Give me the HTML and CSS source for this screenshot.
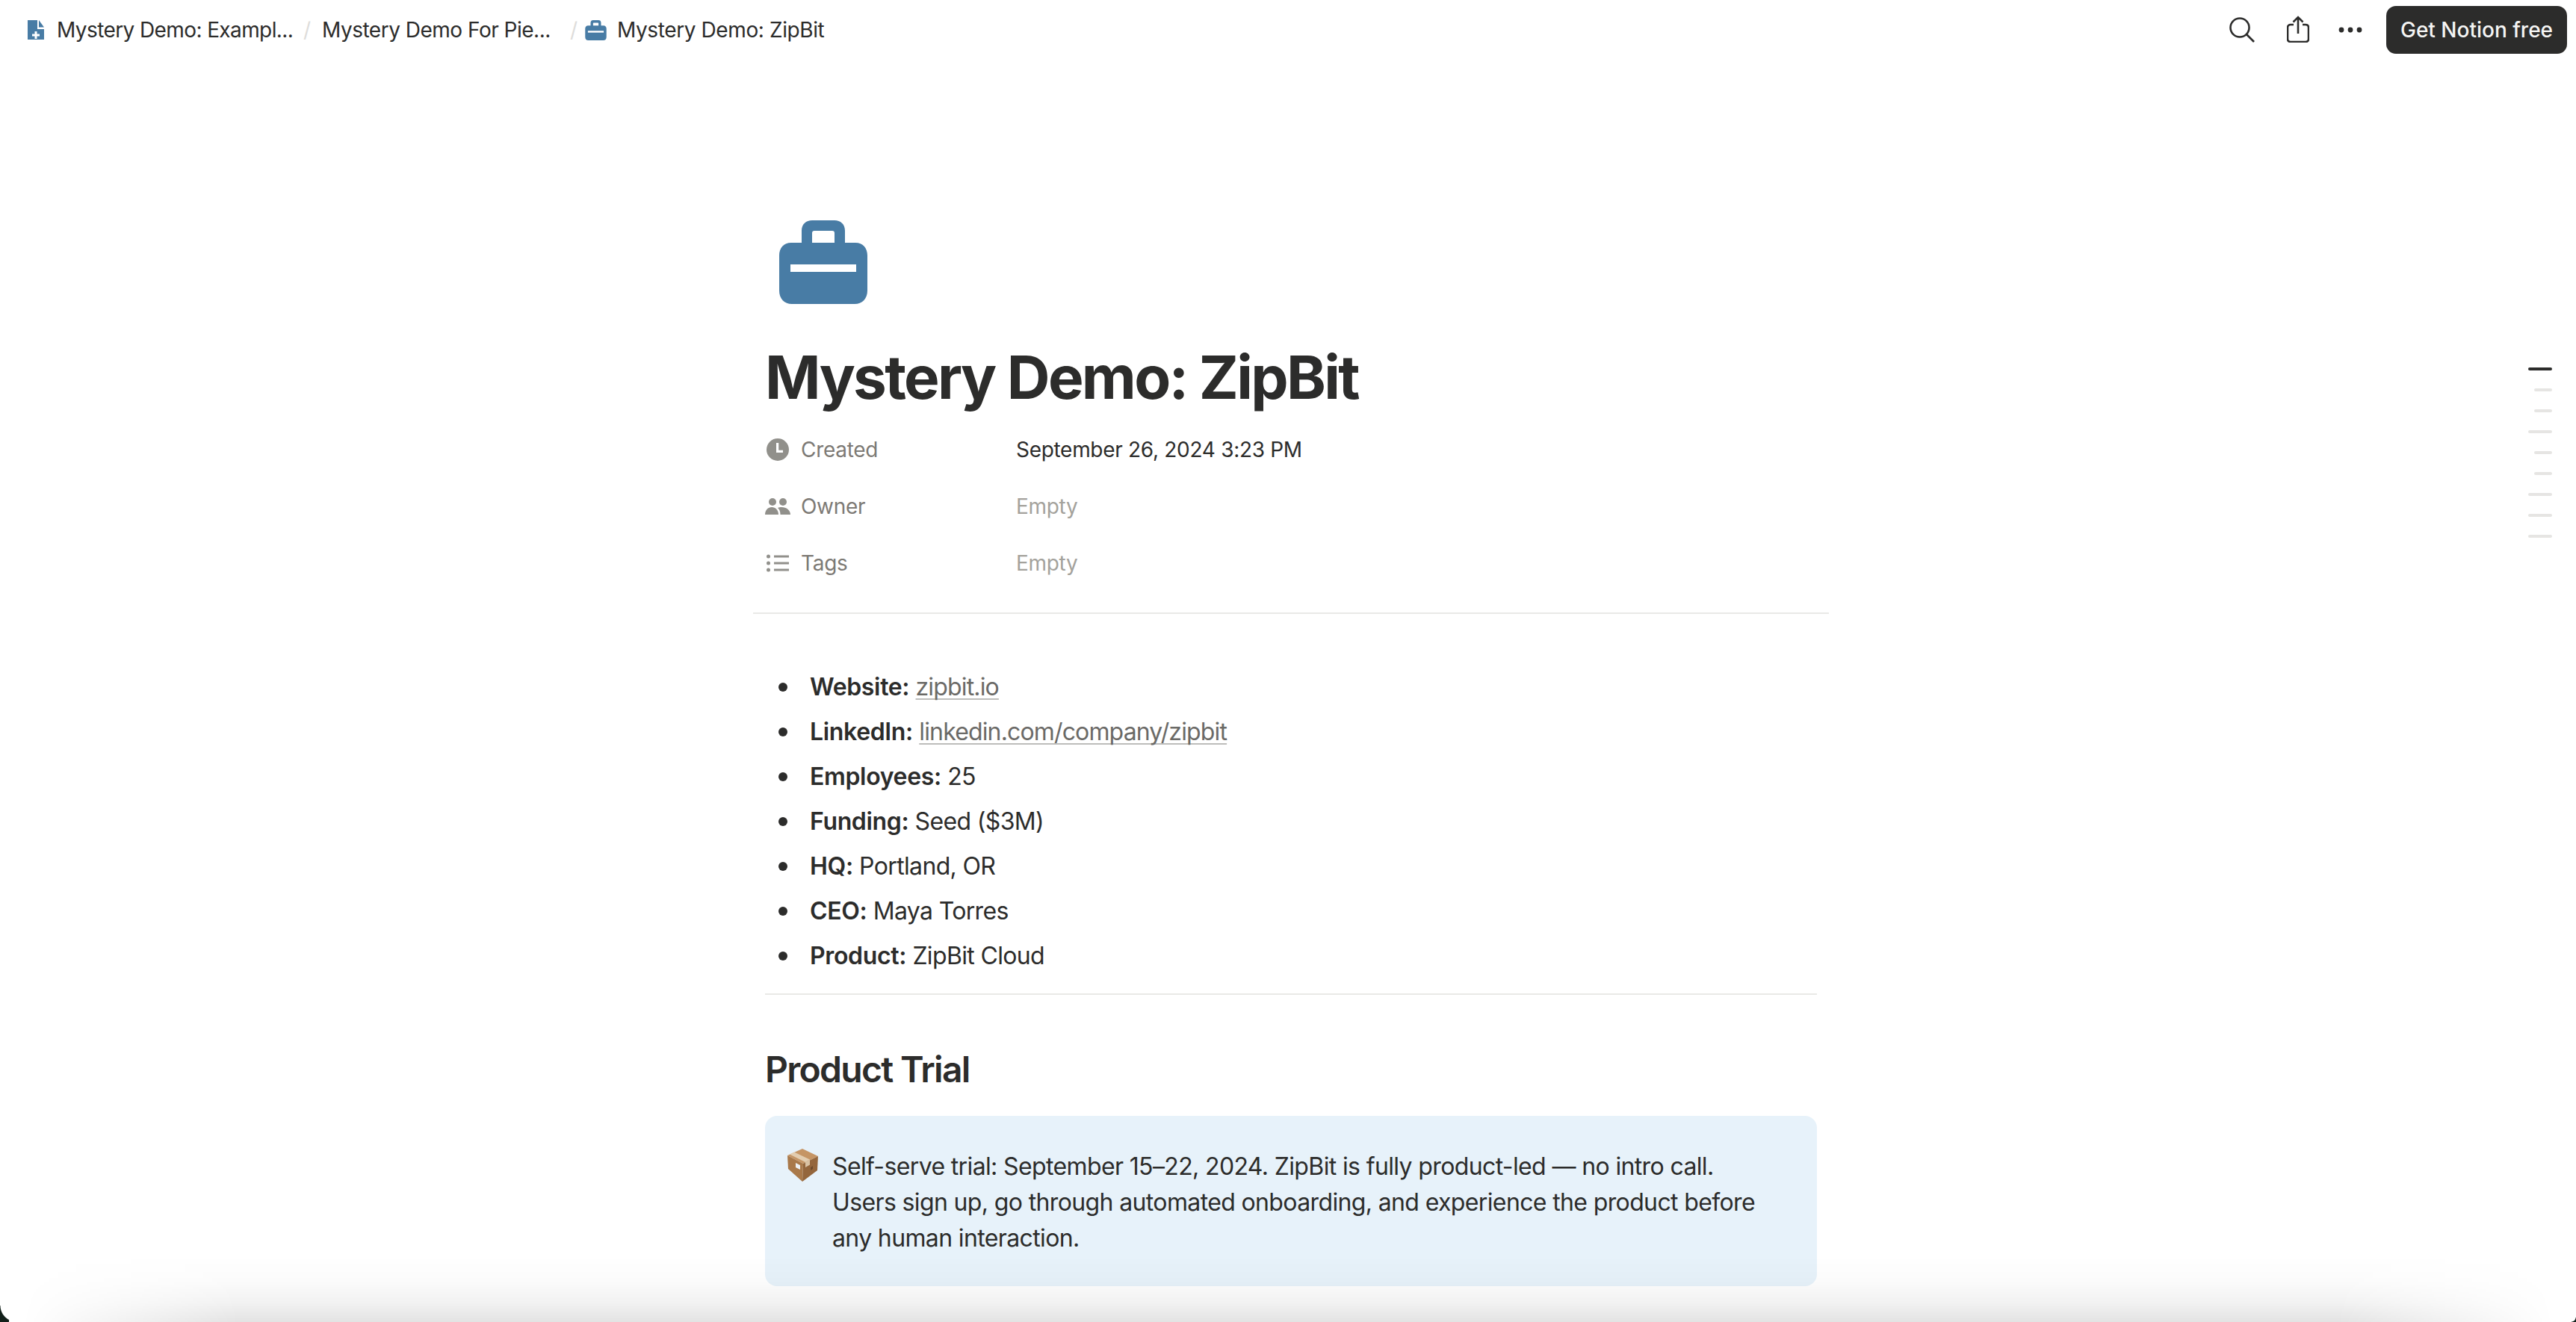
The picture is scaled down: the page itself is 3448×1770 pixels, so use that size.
FILE: index.html
```html
<!DOCTYPE html>
<html lang="en">
<head>
<meta charset="utf-8">
<title>Mystery Demo: ZipBit</title>
<link rel="stylesheet" href="styles.css">
</head>
<body>
<div class="page">
  <header class="topbar">
    <nav class="crumbs">
      <svg class="crumb-doc" viewBox="0 0 22 26"><path class="blue" d="M0 0h13v12h9v14H0z"/><path class="blue" d="M15 0l7 9.500h-7z"/><path class="white" d="M9.500 15h3v3.500H16v3h-3.500V25h-3v-3.500H6v-3h3.500z"/></svg>
      <span class="crumb crumb-a">Mystery Demo: Exampl...</span>
      <span class="slash">/</span>
      <span class="crumb crumb-b">Mystery Demo For Pie...</span>
      <span class="slash slash-b">/</span>
      <svg class="crumb-case" viewBox="0 0 118 112"><path class="blue" d="M30 30V14C30 5 36 0 44 0h30c8 0 14 5 14 14v16h14c10 0 16 7 16 17v47c0 11-7 18-17 18H17C7 112 0 105 0 94V47c0-10 6-17 16-17zM44 30h30V17c0-2-1-3-3-3H47c-2 0-3 1-3 3z"/><rect class="white" x="15" y="59" width="88" height="10"/></svg>
      <span class="crumb">Mystery Demo: ZipBit</span>
    </nav>
    <div class="actions">
      <svg class="ic-search" viewBox="0 0 34 34"><circle cx="14" cy="14" r="12.500"/><path d="M23 23l10 10"/></svg>
      <svg class="ic-share" viewBox="0 0 30 36"><path d="M9 12H5c-2.500 0-4 1.500-4 4v15c0 2.500 1.500 4 4 4h20c2.500 0 4-1.500 4-4V16c0-2.500-1.500-4-4-4h-4"/><path d="M15 24V2M8.500 8.500L15 2l6.500 6.500"/></svg>
      <svg class="ic-dots" viewBox="0 0 32 8"><circle cx="4" cy="4" r="3.400"/><circle cx="16" cy="4" r="3.400"/><circle cx="28" cy="4" r="3.400"/></svg>
      <span class="cta">Get Notion free</span>
    </div>
  </header>

  <main class="doc">
    <svg class="page-icon" viewBox="0 0 118 112"><path class="blue" d="M30 30V14C30 5 36 0 44 0h30c8 0 14 5 14 14v16h14c10 0 16 7 16 17v47c0 11-7 18-17 18H17C7 112 0 105 0 94V47c0-10 6-17 16-17zM44 30h30V17c0-2-1-3-3-3H47c-2 0-3 1-3 3z"/><rect class="white" x="15" y="59" width="88" height="10"/></svg>
    <h1 class="title">Mystery Demo: ZipBit</h1>

    <section class="props">
      <div class="prop">
        <span class="prop-ico"><svg class="ic-clock" viewBox="0 0 30 30"><circle class="gray" cx="15" cy="15" r="15"/><path class="white" d="M13 6h3.200v9.800H22V19h-9z"/></svg></span>
        <span class="prop-name">Created</span>
        <span class="prop-val">September 26, 2024 3:23 PM</span>
      </div>
      <div class="prop">
        <span class="prop-ico"><svg class="ic-people" viewBox="0 0 34 22"><circle class="gray" cx="10" cy="5" r="5"/><circle class="gray" cx="24" cy="5" r="5"/><path class="gray" d="M0 22c0-6 4-10 9-10s9 4 9 10z"/><path class="gray" d="M20.500 22c0-4-1-7-3.500-9 1.500-.7 3.500-1 5-1 6.500 0 12 4 12 10z"/></svg></span>
        <span class="prop-name">Owner</span>
        <span class="prop-val muted">Empty</span>
      </div>
      <div class="prop">
        <span class="prop-ico"><svg class="ic-list" viewBox="0 0 30 24"><circle class="gray" cx="2.500" cy="3" r="2.500"/><circle class="gray" cx="2.500" cy="12" r="2.500"/><circle class="gray" cx="2.500" cy="21" r="2.500"/><rect class="gray" x="10" y="1.500" width="20" height="3"/><rect class="gray" x="10" y="10.500" width="20" height="3"/><rect class="gray" x="10" y="19.500" width="20" height="3"/></svg></span>
        <span class="prop-name">Tags</span>
        <span class="prop-val muted">Empty</span>
      </div>
    </section>
    <hr class="rule rule-wide">

    <ul class="facts">
      <li><b>Website:</b> <a class="link">zipbit.io</a></li>
      <li><b>LinkedIn:</b> <a class="link">linkedin.com/company/zipbit</a></li>
      <li><b>Employees:</b> 25</li>
      <li><b>Funding:</b> Seed ($3M)</li>
      <li><b>HQ:</b> Portland, OR</li>
      <li><b>CEO:</b> Maya Torres</li>
      <li><b>Product:</b> ZipBit Cloud</li>
    </ul>
    <hr class="rule">

    <h2 class="heading">Product Trial</h2>

    <div class="callout">
      <svg class="emoji" viewBox="0 0 41 44">
        <path fill="#c59565" d="M20 0l21 10-20 10L0 9z"/>
        <path fill="#a9794a" d="M0 9l21 11-1 24L1 27z"/>
        <path fill="#94663c" d="M41 10L21 20l-1 24 20-15z"/>
        <path fill="#e2cdb0" d="M9 4.500l21 10-6 3.500L3 7.500z"/>
        <path fill="#d9c2a4" d="M24 18l6-3.500v7l-6 3.500z"/>
        <path fill="#eef1f3" d="M11 19l6 3v6l-6-3z"/>
        <path fill="#6d4a2a" d="M31 25l3-2v4l-3 2z"/>
      </svg>
      <p class="callout-text">Self-serve trial: September 15–22, 2024. ZipBit is fully product-led — no intro call. Users sign up, go through automated onboarding, and experience the product before any human interaction.</p>
    </div>
  </main>

  <aside class="outline">
    <i class="mark on"></i><i class="mark short"></i><i class="mark short"></i><i class="mark"></i><i class="mark short"></i><i class="mark short"></i><i class="mark"></i><i class="mark"></i><i class="mark"></i>
  </aside>

  <div class="bottom-shade"></div>
  <div class="corner corner-l"></div>
  <div class="corner corner-r"></div>
</div>
</body>
</html>
```
FILE: styles.css
```css
* { box-sizing: border-box; }
html, body { margin: 0; padding: 0; background: #fff; }
body { font-family: Inter, "Liberation Sans", sans-serif; color: #2c2c2b; }
.page { position: relative; width: 3448px; height: 1770px; overflow: hidden; background: #fff; }

.blue { fill: #487ca5; }
.white { fill: #fff; }
.gray { fill: #91908b; }

.topbar { height: 80px; display: flex; align-items: center; justify-content: space-between; padding: 0 12px 0 37px; }
.crumbs { display: flex; align-items: center; font-size: 28px; line-height: 40px; letter-spacing: -0.4px; white-space: nowrap; }
.crumb-doc { width: 22px; height: 26px; margin-right: 17px; }
.crumb-case { width: 29px; height: 27px; margin-right: 14px; }
.crumb-a { width: 318px; letter-spacing: -0.6px; }
.crumb-b { width: 306px; letter-spacing: -0.5px; }
.slash { width: 37px; padding-left: 12px; color: #dedddb; }
.slash-b { width: 46px; padding-left: 26px; }

.actions { display: flex; align-items: center; }
.actions svg { fill: none; stroke: #2c2c2b; stroke-width: 2.600; }
.ic-search { width: 34px; height: 34px; margin-right: 43px; }
.ic-share { width: 30px; height: 36px; margin-right: 39px; margin-top: -3px; }
.actions .ic-dots { width: 32px; height: 8px; margin-right: 32px; fill: #2c2c2b; stroke: none; }
.cta { width: 242px; height: 64px; display: flex; align-items: center; justify-content: center; background: #2c2c2b; color: #f5f5f4; border-radius: 13px; font-size: 28px; font-weight: 500; }

.doc { width: 1408px; margin-left: 1024px; }
.page-icon { display: block; width: 118px; height: 112px; margin: 215px 0 0 19px; }
.title { margin: 50px 0 0; font-size: 80px; line-height: 96px; font-weight: 700; letter-spacing: -2.700px; }

.props { margin-top: 11px; }
.prop { height: 76px; display: flex; align-items: center; font-size: 28px; letter-spacing: -0.3px; }
.prop-ico { width: 48px; display: flex; align-items: center; justify-content: center; padding-right: 14px; }
.prop-name { width: 288px; color: #7d7a75; }
.prop-val { color: #2c2c2b; }
.prop-val.muted { color: #a4a29c; }
.ic-clock { width: 30px; height: 30px; }
.ic-people { width: 34px; height: 22px; }
.ic-list { width: 30px; height: 24px; }

.rule { border: 0; height: 2px; margin: 0; background: #e9e9e7; }
.rule-wide { margin: 28px -16px 0; }

.facts { list-style: none; margin: 68px 0 0; padding: 0; font-size: 32px; line-height: 60px; letter-spacing: -0.65px; }
.facts li { position: relative; padding-left: 60px; height: 60px; }
.facts li::before { content: ""; position: absolute; left: 18px; top: 24px; width: 12px; height: 12px; border-radius: 50%; background: #2c2c2b; }
.facts b { font-weight: 600; letter-spacing: -0.35px; }
.link { color: #6b6a67; letter-spacing: -0.85px; text-decoration: underline; text-decoration-color: #bdbdbb; text-decoration-thickness: 2px; text-underline-offset: 4px; text-decoration-skip-ink: none; }

.facts + .rule { margin-top: 20px; }
.heading { margin: 70px 0 0; font-size: 48px; line-height: 60px; font-weight: 600; letter-spacing: -1.700px; }

.callout { display: flex; margin-top: 32px; padding: 44px 62px 40px 30px; height: 228px; background: #e7f2fa; border-radius: 16px; }
.emoji { width: 41px; height: 44px; flex: none; margin: 0 19px 0 0; }
.callout-text { margin: 0; font-size: 32px; line-height: 48px; letter-spacing: -0.63px; }

.outline { position: absolute; right: 32px; top: 492px; display: flex; flex-direction: column; align-items: flex-end; gap: 24px; }
.mark { display: block; width: 32px; height: 4px; border-radius: 2px; background: #e6e5e3; }
.mark.short { width: 24px; }
.mark.on { background: #2c2c2b; }

.bottom-shade { position: absolute; left: 0; right: 0; bottom: 0; height: 90px; background: linear-gradient(to bottom, rgba(0,0,0,0) 0%, rgba(0,0,0,0.015) 40%, rgba(0,0,0,0.05) 70%, rgba(0,0,0,0.11) 100%); -webkit-mask-image: linear-gradient(to right, transparent 30px, #000 320px, #000 3128px, transparent 3418px); mask-image: linear-gradient(to right, transparent 30px, #000 320px, #000 3128px, transparent 3418px); }
.corner { position: absolute; bottom: 0; width: 12px; height: 22px; }
.corner-l { left: 0; background: radial-gradient(circle 22px at 22px 0, transparent 21px, #12201a 22px); }
.corner-r { right: 0; width: 6px; height: 6px; background: radial-gradient(circle 6px at 0 0, transparent 5px, #12201a 6px); }
```
